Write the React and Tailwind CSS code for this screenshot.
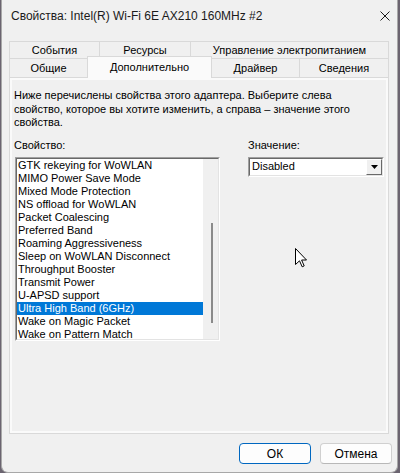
import React from "react";

const items = [
  "GTK rekeying for WoWLAN",
  "MIMO Power Save Mode",
  "Mixed Mode Protection",
  "NS offload for WoWLAN",
  "Packet Coalescing",
  "Preferred Band",
  "Roaming Aggressiveness",
  "Sleep on WoWLAN Disconnect",
  "Throughput Booster",
  "Transmit Power",
  "U-APSD support",
  "Ultra High Band (6GHz)",
  "Wake on Magic Packet",
  "Wake on Pattern Match",
];

const font = { fontFamily: '"Liberation Sans", Arial, sans-serif' };

export default function App() {
  return (
    <div
      className="w-[400px] h-[473px] bg-[#6b6470] flex overflow-hidden text-black"
      style={font}
    >
      <div className="relative ml-[1px] w-[397px] h-[473px] bg-[#f0f0f0] border-l border-r border-b border-[#a8a8a8] rounded-b-[7px] flex flex-col">
        {/* Title bar */}
        <div className="h-[31px] flex items-center pl-[9px] shrink-0">
          <span className="text-[12px] leading-none text-[#1a1a1a]">
            Свойства: Intel(R) Wi-Fi 6E AX210 160MHz #2
          </span>
          <div className="ml-auto w-[10px] h-[31px] flex items-center justify-center mr-[7px]">
            <svg width="10" height="10" viewBox="0 0 10 10">
              <path d="M0.5 0.5 L9.5 9.5 M9.5 0.5 L0.5 9.5" stroke="#1a1a1a" strokeWidth="1" fill="none" />
            </svg>
          </div>
        </div>

        {/* Tabs */}
        <div className="mt-[10px] ml-[7px] w-[380px] flex flex-col text-[11px] leading-none">
          <div className="flex h-[17px]">
            <div className="w-[90px] border-t border-l border-[#d9d9d9] flex items-center justify-center">События</div>
            <div className="w-[91px] border-t border-l border-[#d9d9d9] flex items-center justify-center">Ресурсы</div>
            <div className="flex-1 border-t border-l border-r border-[#d9d9d9] flex items-center justify-center">Управление электропитанием</div>
          </div>
          <div className="flex h-[19px]">
            <div className="w-[78px] border-t border-l border-[#d9d9d9] flex items-center justify-center pt-[1px]">Общие</div>
            <div className="relative z-10 w-[125px] -mt-[2px] h-[22px] border-t border-l border-r border-[#d9d9d9] bg-[#fafafa] flex items-start justify-center pt-[5px]">Дополнительно</div>
            <div className="w-[87px] border-t border-[#d9d9d9] flex items-center justify-center pt-[1px]">Драйвер</div>
            <div className="flex-1 border-t border-l border-r border-[#d9d9d9] flex items-center justify-center pt-[1px]">Сведения</div>
          </div>
        </div>

        {/* Panel */}
        <div className="ml-[7px] w-[380px] h-[357px] border border-[#d9d9d9] bg-[#fafafa] p-[2px] shrink-0">
          <div className="w-full h-full bg-[#f0f0f0] pl-[2px] pt-[9px] text-[11px]">
            <p className="leading-[13.5px] w-[340px]">
              Ниже перечислены свойства этого адаптера. Выберите слева свойство, которое вы хотите изменить, а справа – значение этого свойства.
            </p>
            <div className="flex mt-[9px]">
              <div className="w-[206px] flex flex-col">
                <div className="leading-[13px] h-[13px]">Свойство:</div>
                <div className="mt-[5px] ml-[1px] w-[205px] h-[184px] border border-t-[#a0a0a0] border-l-[#a0a0a0] border-b-white border-r-white flex">
                  <div className="flex-1 border border-t-[#696969] border-l-[#696969] border-b-[#e3e3e3] border-r-[#e3e3e3] bg-white flex">
                    <div className="flex-1 flex flex-col">
                      {items.map((it) => {
                        const sel = it === "Ultra High Band (6GHz)";
                        return (
                          <div
                            key={it}
                            className={
                              "h-[13px] leading-[13px] pl-[1px] whitespace-nowrap " +
                              (sel ? "bg-[#0078d7] text-white" : "text-black")
                            }
                          >
                            {it}
                          </div>
                        );
                      })}
                    </div>
                    <div className="w-[15px] bg-[#f0f0f0] flex flex-col pt-[64px]">
                      <div className="ml-[8px] w-[2px] h-[100px] bg-[#8a8a8a]" />
                    </div>
                  </div>
                </div>
              </div>
              <div className="ml-[28px] w-[136px] flex flex-col">
                <div className="leading-[13px] h-[13px]">Значение:</div>
                <div className="mt-[5px] w-[136px] h-[20px] border border-t-[#a0a0a0] border-l-[#a0a0a0] border-b-white border-r-white flex">
                  <div className="flex-1 border border-t-[#696969] border-l-[#696969] border-b-[#e3e3e3] border-r-[#e3e3e3] bg-white flex items-center">
                    <span className="pl-[2px] leading-none">Disabled</span>
                    <div className="ml-auto w-[16px] h-full bg-[#f0f0f0] border border-t-white border-l-white border-b-[#696969] border-r-[#696969] flex items-center justify-center">
                      <svg width="7" height="4" viewBox="0 0 7 4">
                        <path d="M0 0 H7 L3.5 4 Z" fill="#000" />
                      </svg>
                    </div>
                  </div>
                </div>
              </div>
            </div>
          </div>
        </div>

        {/* Buttons */}
        <div className="flex justify-end gap-[9px] mt-[9px] pr-[5px] text-[12px]">
          <button className="w-[72px] h-[21px] rounded-[4px] border border-[#0067c0] bg-[#fdfdfd] leading-none">ОК</button>
          <button className="w-[72px] h-[21px] rounded-[4px] border border-[#d0d0d0] border-b-[#b8b8b8] bg-[#fdfdfd] leading-none">Отмена</button>
        </div>

        {/* Mouse cursor */}
        <svg className="absolute left-[293px] top-[248px]" width="12" height="20" viewBox="0 0 12 20">
          <path d="M0.5 0.5 V16.5 L4.5 12.8 L7.2 18.8 L9.2 17.9 L6.6 12 H11.5 Z" fill="#fff" stroke="#000" strokeWidth="1" strokeLinejoin="round" />
        </svg>
      </div>
    </div>
  );
}
